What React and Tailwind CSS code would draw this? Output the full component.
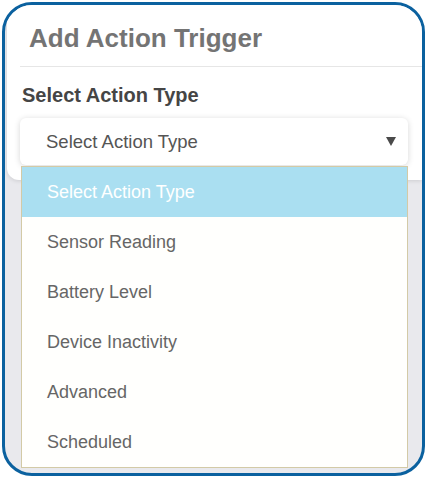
import React from 'react';

const options = ['Select Action Type', 'Sensor Reading', 'Battery Level', 'Device Inactivity', 'Advanced', 'Scheduled'];

export default function App() {
    return (
        <div className="w-[427px] h-[478px] bg-white p-[2px] font-['Liberation_Sans',Arial,sans-serif]">
            <div className="w-[423px] h-[474px] border-[3px] border-[#0b619f] rounded-[30px] overflow-hidden bg-[#e9e9ed]">
                <div className="ml-[2px] bg-white rounded-bl-[12px] pb-[15px] shadow-[0_1px_4px_rgba(0,0,0,0.12)]">
                    <div className="ml-[13px] pl-[9px] pt-[18px] h-[62px] border-b border-[#e6e6e6]">
                        <h2 className="text-[26px] leading-[30px] font-bold text-[#747474]">Add Action Trigger</h2>
                    </div>
                    <p className="pl-[15px] mt-[17px] text-[20px] leading-[22px] font-bold text-[#454545]">Select Action Type</p>
                    <div className="relative ml-[13px] mt-[12px] w-[388px]">
                        <div className="h-[47px] rounded-[6px] bg-white shadow-[0_1px_6px_rgba(0,0,0,0.16)] flex items-center justify-between pl-[26px] pr-[12px]">
                            <span className="text-[18.5px] text-[#555]">Select Action Type</span>
                            <svg width="10" height="9" viewBox="0 0 10 9">
                                <path d="M0 0h10L5 9z" fill="#4a4a4a" />
                            </svg>
                        </div>
                        <ul className="absolute left-[1px] top-[48px] w-[387px] border border-[#d3caa6] bg-[#fffffd] z-10">
                            {options.map((o, i) => (
                                <li
                                    key={o}
                                    className={i === 0
                                        ? 'h-[50px] flex items-center pl-[25px] text-[18px] bg-[#aadff1] text-white'
                                        : 'h-[50px] flex items-center pl-[25px] text-[18px] text-[#666]'}
                                >
                                    {o}
                                </li>
                            ))}
                        </ul>
                    </div>
                </div>
            </div>
        </div>
    );
}
